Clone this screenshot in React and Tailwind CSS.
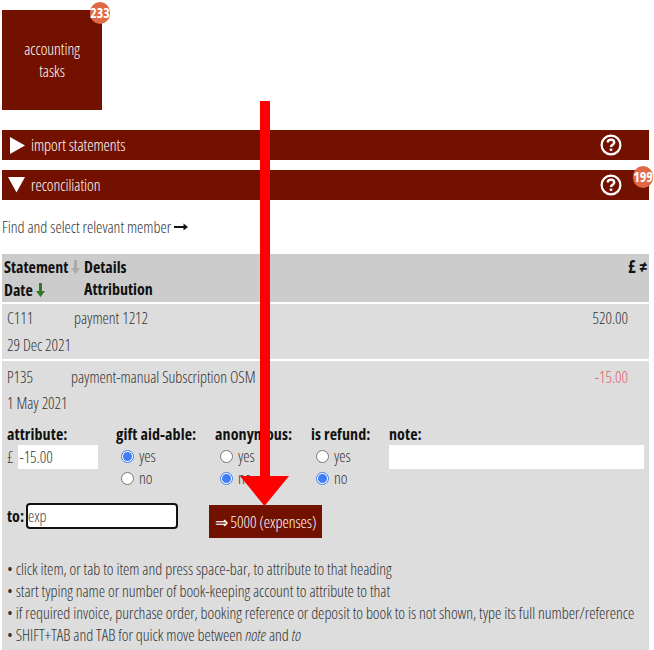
import React from 'react'

function Badge({ n, className }) {
    return (
        <div className={"absolute w-5 h-[22px] rounded-full bg-[#df6a45] text-white text-[14px] font-bold flex items-center justify-center " + className}>
            {n}
        </div>
    )
}

function HelpIcon() {
    return (
        <svg width="22" height="22" viewBox="0 0 22 22" fill="none" stroke="white" strokeWidth="2.2">
            <circle cx="11" cy="11" r="9.4" />
            <path d="M7.8 8.6c0-2 1.4-3 3.2-3s3.2 1.1 3.2 2.8c0 2.4-3.2 2.3-3.2 4.6" strokeWidth="2.4" />
            <path d="M11 14.6v2.2" strokeWidth="2.6" />
        </svg>
    )
}

function SectionBar({ open, title }) {
    return (
        <div className="h-[30px] bg-[#731100] flex items-center text-white text-[16px]">
            <div className="w-[29px] flex justify-center">
                {open ? (
                    <svg width="17" height="16" viewBox="0 0 17 16"><path d="M0 0H17L8.5 15.5Z" fill="white" /></svg>
                ) : (
                    <svg width="15" height="17" viewBox="0 0 15 17" className="ml-[2px]"><path d="M0 0L15 8.5L0 17Z" fill="white" /></svg>
                )}
            </div>
            <span className="flex-1">{title}</span>
            <div className="mr-[27px]"><HelpIcon /></div>
        </div>
    )
}

function Radio({ checked, label }) {
    return (
        <div className="flex items-center h-[22px] pl-[5px]">
            <span className={"w-[13px] h-[13px] rounded-full border flex items-center justify-center " + (checked ? "border-[#3b78f0] bg-white" : "border-[#767676] bg-white")}>
                {checked && <span className="w-[9px] h-[9px] rounded-full bg-[#3f7cf5]" />}
            </span>
            <span className="ml-[5px] text-[#333]">{label}</span>
        </div>
    )
}

function RadioGroup({ title, value, className }) {
    return (
        <div className={className}>
            <div className="font-bold text-[#111] h-[22px] leading-[22px] tracking-[0.1px]">{title}</div>
            <div>
                <Radio checked={value === 'yes'} label="yes" />
                <Radio checked={value === 'no'} label="no" />
            </div>
        </div>
    )
}

export default function App() {
    return (
        <div
            className="relative w-[654px] h-[650px] overflow-hidden bg-white px-[2px] text-[16px] leading-[22px] text-[#333] font-light tracking-[-0.04px]"
            style={{ fontFamily: '"Open Sans", sans-serif', fontStretch: '75%' }}
        >
            <div className="relative w-[100px] h-[100px] mt-[10px] bg-[#731100] text-white flex flex-col items-center justify-center text-center">
                <div>accounting</div>
                <div>tasks</div>
                <Badge n="233" className="-top-2 -right-2" />
            </div>

            <div className="w-[647px] mt-5 flex flex-col gap-[10px] relative">
                <SectionBar title="import statements" />
                <SectionBar open title="reconciliation" />
                <Badge n="199" className="top-[36px] -right-1" />
            </div>

            <div className="h-[54px] flex items-center w-[647px] pb-[1px]">
                Find and select relevant member
                <svg width="14" height="8" viewBox="0 0 14 8" className="ml-[3px]"><path d="M0 4H11" stroke="#111" strokeWidth="2" /><path d="M9.5 0.5L14 4L9.5 7.5Z" fill="#111" /></svg>
            </div>

            <div className="w-[647px]">
                <div className="h-[48px] bg-[#cccccc] font-bold text-[#111] flex pl-[2px] pr-[2px] tracking-normal">
                    <div className="w-[80px]">
                        <div className="h-[25px] leading-[26px] flex items-center">
                            Statement
                            <svg width="9" height="14" viewBox="0 0 9 14" className="ml-[3px]"><path d="M3 0H6V8H9L4.5 14L0 8H3Z" fill="#aaaaaa" /></svg>
                        </div>
                        <div className="h-[22px] leading-[21px] flex items-center">
                            Date
                            <svg width="9" height="14" viewBox="0 0 9 14" className="ml-[3px]"><path d="M3 0H6V8H9L4.5 14L0 8H3Z" fill="#2f7a1f" /></svg>
                        </div>
                    </div>
                    <div className="flex-1">
                        <div className="h-[25px] leading-[26px]">Details</div>
                        <div className="leading-[21px]">Attribution</div>
                    </div>
                    <div className="leading-[26px] text-[17px]">£ ≠</div>
                </div>

                <div className="mt-[2px] h-[55px] bg-[#dddddd] relative pl-[5px] pr-[21px]">
                    <div className="flex justify-between h-[28px] items-center">
                        <div className="flex">
                            <span className="w-[67px]">C111</span>
                            <span>payment 1212</span>
                        </div>
                        <span>520.00</span>
                    </div>
                    <div className="h-[26px] leading-[26px]">29 Dec 2021</div>
                </div>

                <div className="mt-[2px] h-[289px] bg-[#dddddd] pl-[5px] pr-[5px]">
                    <div className="flex justify-between h-[31px] items-center pr-[16px]">
                        <div className="flex">
                            <span className="w-[64px]">P135</span>
                            <span>payment-manual Subscription OSM</span>
                        </div>
                        <span className="text-[#e0606a]">-15.00</span>
                    </div>
                    <div className="h-[22px]">1 May 2021</div>

                    <div className="flex mt-[9px]">
                        <div className="w-[109px]">
                            <div className="font-bold text-[#111] h-[22px] tracking-[0.1px]">attribute:</div>
                            <div className="flex items-center">
                                <span>£</span>
                                <div className="ml-[5px] w-[80px] h-[24px] bg-white pl-[1px] leading-[24px]">-15.00</div>
                            </div>
                        </div>
                        <RadioGroup title="gift aid-able:" value="yes" className="w-[99px]" />
                        <RadioGroup title="anonymous:" value="no" className="w-[96px]" />
                        <RadioGroup title="is refund:" value="no" className="w-[78px]" />
                        <div className="flex-1">
                            <div className="font-bold text-[#111] h-[22px] tracking-[0.1px]">note:</div>
                            <div className="h-[24px] bg-white" />
                        </div>
                    </div>

                    <div className="flex items-start mt-[14px]">
                        <div className="font-bold text-[#111] mt-[2px] w-[19px] tracking-normal">to:</div>
                        <div className="w-[152px] h-[26px] bg-white border-2 border-[#111] rounded-[4px] leading-[22px] text-[#444]">exp</div>
                        <div className="ml-[31px] mt-[2px] w-[113px] h-[33px] bg-[#731100] text-white flex items-center justify-center">⇒ 5000 (expenses)</div>
                    </div>

                    <div className="mt-[20px] whitespace-nowrap">
                        <div>• click item, or tab to item and press space-bar, to attribute to that heading</div>
                        <div>• start typing name or number of book-keeping account to attribute to that</div>
                        <div>• if required invoice, purchase order, booking reference or deposit to book to is not shown, type its full number/reference</div>
                        <div>• SHIFT+TAB and TAB for quick move between <i>note</i> and <i>to</i></div>
                    </div>
                </div>
            </div>

            {/* red arrow drawn over the screenshot */}
            <svg className="absolute left-[240px] top-[101px]" width="50" height="405" viewBox="0 0 50 405">
                <path d="M20 0H30V375H49L24.5 405L0 375H20Z" fill="#ff0000" />
            </svg>
        </div>
    )
}
